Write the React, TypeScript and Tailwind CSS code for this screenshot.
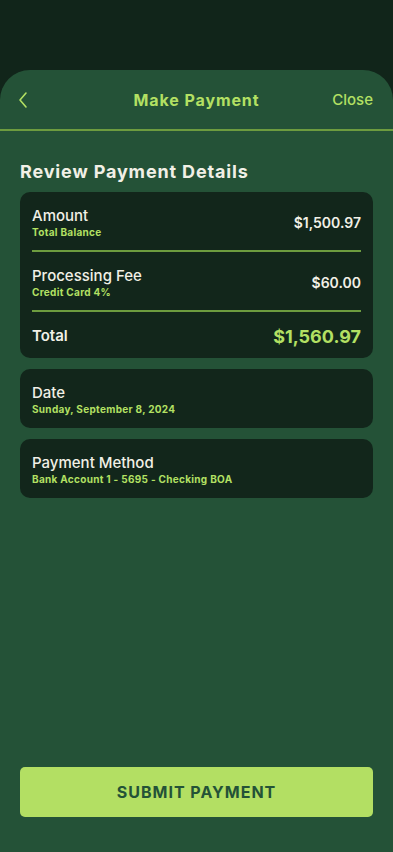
import React from "react";

const font = { fontFamily: "Inter, 'DejaVu Sans', sans-serif" };

function Row({ label, sub, value }: { label: string; sub: string; value: string }) {
  return (
    <div className="flex items-center justify-between">
      <div className="flex flex-col">
        <span className="text-[15px] font-medium leading-[20px] text-[#f1f0e6]">{label}</span>
        <span className="text-[10px] font-bold leading-[12px] tracking-[0.3px] text-[#b3e063]">{sub}</span>
      </div>
      <span className="text-[14px] font-semibold text-[#f1f0e6]">{value}</span>
    </div>
  );
}

export default function App() {
  return (
    <div className="min-h-[852px] w-full bg-[#11251a] pt-[70px]" style={font}>
      <div className="flex min-h-[782px] flex-col rounded-t-[30px] bg-[#245237]">
        <div className="relative flex h-[61px] items-center justify-center border-b-2 border-[#6d9c3f]">
          <svg className="absolute left-[16px] top-[21px]" width="14" height="18" viewBox="0 0 14 18" fill="none">
            <path d="M10 2 L4 9 L10 16" stroke="#b3e063" strokeWidth="1.6" strokeLinecap="round" strokeLinejoin="round" />
          </svg>
          <span className="text-[16px] font-bold tracking-[0.9px] text-[#b3e063]">Make Payment</span>
          <span className="absolute right-[20px] top-[19px] text-[15px] font-medium text-[#b3e063]">Close</span>
        </div>
        <div className="flex flex-1 flex-col px-[20px] pb-[35px]">
          <h1 className="mt-[29px] text-[18px] font-bold leading-[24px] tracking-[0.85px] text-[#f1f0e6]">Review Payment Details</h1>
          <div className="mt-[8px] rounded-[10px] bg-[#12261b] px-[12px]">
            <div className="flex h-[60px] flex-col justify-center border-b-2 border-[#6d9c3f] pt-[2px]">
              <Row label="Amount" sub="Total Balance" value="$1,500.97" />
            </div>
            <div className="flex h-[60px] flex-col justify-center border-b-2 border-[#6d9c3f] pt-[2px]">
              <Row label="Processing Fee" sub="Credit Card 4%" value="$60.00" />
            </div>
            <div className="flex h-[46px] items-center justify-between pt-[3px]">
              <span className="text-[15px] font-semibold text-[#f1f0e6]">Total</span>
              <span className="text-[18px] font-bold text-[#b3e063]">$1,560.97</span>
            </div>
          </div>
          <div className="mt-[11px] flex h-[59px] flex-col justify-center rounded-[10px] bg-[#12261b] px-[12px]">
            <span className="text-[15px] font-medium leading-[20px] text-[#f1f0e6]">Date</span>
            <span className="text-[10px] font-bold leading-[12px] tracking-[0.3px] text-[#b3e063]">Sunday, September 8, 2024</span>
          </div>
          <div className="mt-[11px] flex h-[59px] flex-col justify-center rounded-[10px] bg-[#12261b] px-[12px]">
            <span className="text-[15px] font-medium leading-[20px] text-[#f1f0e6]">Payment Method</span>
            <span className="text-[10px] font-bold leading-[12px] tracking-[0.3px] text-[#b3e063]">Bank Account 1 - 5695 - Checking BOA</span>
          </div>
          <div className="flex-1" />
          <button className="flex h-[50px] w-full items-center justify-center rounded-[5px] bg-[#b3df63] text-[16px] font-bold tracking-[1px] text-[#245237]">
            SUBMIT PAYMENT
          </button>
        </div>
      </div>
    </div>
  );
}
